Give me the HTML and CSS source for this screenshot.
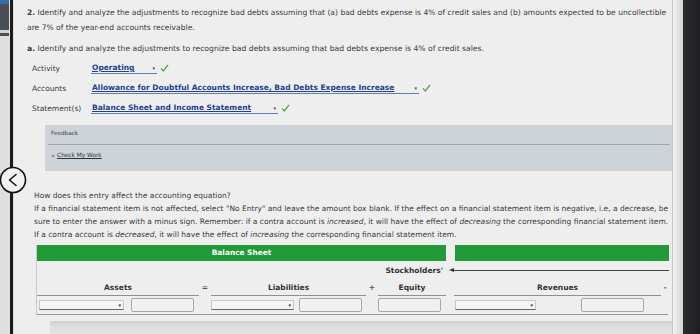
FILE: index.html
```html
<!DOCTYPE html>
<html>
<head>
<meta charset="utf-8">
<link rel="stylesheet" href="styles.css">
</head>
<body>
<div class="screen">
  <div class="rail"><div class="rail-top"></div><div class="rail-line"></div></div>
  <div class="back-btn">
    <svg width="28" height="28" viewBox="0 0 28 28"><circle cx="14" cy="14" r="12.5" fill="#f2f2f2" stroke="#111" stroke-width="1.6"/><path d="M17 8.5 L10.5 14 L17 19.5" fill="none" stroke="#111" stroke-width="1.6" stroke-linecap="round" stroke-linejoin="round"/></svg>
  </div>
  <main class="content">
    <p class="question"><b>2.</b> Identify and analyze the adjustments to recognize bad debts assuming that (a) bad debts expense is 4% of credit sales and (b) amounts expected to be uncollectible are 7% of the year-end accounts receivable.</p>
    <p class="sub"><b>a.</b> Identify and analyze the adjustments to recognize bad debts assuming that bad debts expense is 4% of credit sales.</p>
    <div class="fields">
      <div class="field">
        <span class="label">Activity</span>
        <span class="select sel-op"><span class="val">Operating</span><span class="caret">▾</span></span>
        <svg class="check" width="9" height="8" viewBox="0 0 9 8"><path d="M1 4.5 L3.3 7 L8 1" fill="none" stroke="#5aa35a" stroke-width="1.3"/></svg>
      </div>
      <div class="field">
        <span class="label">Accounts</span>
        <span class="select sel-acc"><span class="val">Allowance for Doubtful Accounts Increase, Bad Debts Expense Increase</span><span class="caret">▾</span></span>
        <svg class="check" width="9" height="8" viewBox="0 0 9 8"><path d="M1 4.5 L3.3 7 L8 1" fill="none" stroke="#5aa35a" stroke-width="1.3"/></svg>
      </div>
      <div class="field">
        <span class="label">Statement(s)</span>
        <span class="select sel-st"><span class="val">Balance Sheet and Income Statement</span><span class="caret">▾</span></span>
        <svg class="check" width="9" height="8" viewBox="0 0 9 8"><path d="M1 4.5 L3.3 7 L8 1" fill="none" stroke="#5aa35a" stroke-width="1.3"/></svg>
      </div>
    </div>
    <div class="feedback">
      <div class="fb-title">Feedback</div>
      <div class="fb-link"><span class="tri">▶</span><span class="u">Check My Work</span></div>
    </div>
    <p class="how">How does this entry affect the accounting equation?</p>
    <p class="instr">If a financial statement item is not affected, select "No Entry" and leave the amount box blank. If the effect on a financial statement item is negative, i.e, a decrease, be sure to enter the answer with a minus sign. Remember: if a contra account is <i>increased</i>, it will have the effect of <i>decreasing</i> the corresponding financial statement item. If a contra account is <i>decreased</i>, it will have the effect of <i>increasing</i> the corresponding financial statement item.</p>
    <div class="sheet">
      <div class="grid head-row">
        <div class="bar bar-bs">Balance Sheet</div>
        <div class="bar bar-is"></div>
      </div>
      <div class="grid se-row">
        <div class="se-label">Stockholders'</div>
        <div class="se-arrow"><span class="arrow-head"></span><span class="arrow-line"></span></div>
      </div>
      <div class="grid cols-row">
        <div class="col-h">Assets</div>
        <div class="op">=</div>
        <div class="col-h">Liabilities</div>
        <div class="op">+</div>
        <div class="col-h">Equity</div>
        <div></div>
        <div class="col-h">Revenues</div>
        <div class="op">-</div>
      </div>
      <div class="grid inputs-row">
        <div class="cell c-assets"><span class="dd w85"><span class="caret">▾</span></span><span class="box"></span></div>
        <div></div>
        <div class="cell c-liab"><span class="dd w83"><span class="caret">▾</span></span><span class="box"></span></div>
        <div></div>
        <div class="cell"><span class="box"></span></div>
        <div></div>
        <div class="cell c-rev"><span class="dd w81"><span class="caret">▾</span></span><span class="box"></span></div>
        <div></div>
      </div>
    </div>
    <div class="scrollbar"></div>
  </main>
  <div class="bezel"></div>
  <div class="edge"></div>
</div>
</body>
</html>
```
FILE: styles.css
```css
* { box-sizing: border-box; }
html, body { margin: 0; padding: 0; }
body {
  width: 700px;
  height: 334px;
  overflow: hidden;
  background: #ececec;
  font-family: "DejaVu Sans", Verdana, sans-serif;
  color: #3a3a3a;
}
.screen {
  display: flex;
  width: 700px;
  height: 334px;
  position: relative;
}
.rail {
  width: 14px;
  flex: none;
  background: #dedede;
  display: flex;
  position: relative;
}
.rail-top {
  width: 9px;
  height: 36px;
  background: linear-gradient(#2f6fa8 0 4px, #4a4f55 4px 30px, #cfd4d8 30px 33px, #4a4f55 33px);
}
.rail-line {
  width: 3px;
  margin-left: 1px;
  background: #1b1b1b;
}
.back-btn {
  position: absolute;
  left: -1px;
  top: 166px;
  width: 28px;
  height: 28px;
}
.back-btn svg { display: block; }
.content {
  flex: 1;
  min-width: 0;
  background: #eeeeee;
  padding: 5px 0 0 13px;
  display: flex;
  flex-direction: column;
}
p { margin: 0; }
.question {
  font-size: 7.58px;
  line-height: 15px;
  width: 652px;
}
.sub {
  font-size: 7.65px;
  line-height: 15px;
  margin-top: 6px;
}
.fields {
  margin-top: 2px;
  margin-left: 5px;
  display: flex;
  flex-direction: column;
}
.field {
  height: 20px;
  display: flex;
  align-items: center;
  font-size: 7.5px;
}
.label {
  width: 59px;
  flex: none;
}
.select {
  display: inline-flex;
  align-items: center;
  justify-content: space-between;
  border-bottom: 1px solid #5d7fb8;
  height: 11px;
  color: #22408f;
  font-weight: bold;
  padding-left: 1px;
}
.select .val { text-decoration: underline; text-underline-offset: 1px; }
.select .caret { font-size: 5px; color: #444; margin-right: 2px; margin-left: 6px; }
.sel-op { width: 66px; }
.sel-acc { width: 328px; }
.sel-st { width: 187px; }
.check { margin-left: 3px; }
.feedback {
  margin-top: 7px;
  margin-left: 18px;
  width: 628px;
  height: 48px;
  background: #cdd3d8;
  padding: 4px 3px 0 3px;
}
.fb-title {
  font-size: 5.7px;
  color: #444;
  padding-left: 3px;
  height: 16px;
  line-height: 9px;
  border-bottom: 1px solid #9ea5ab;
}
.fb-link {
  font-size: 5.8px;
  color: #333;
  padding-left: 4px;
  margin-top: 7px;
}
.fb-link .tri { color: #888; font-size: 4px; margin-right: 2px; }
.fb-link .u { text-decoration: underline; }
.how {
  font-size: 7.5px;
  line-height: 13px;
  margin-top: 18px;
  margin-left: 7px;
}
.instr {
  font-size: 7.5px;
  line-height: 13px;
  margin-left: 7px;
  width: 640px;
}
.sheet {
  margin-top: 4px;
  margin-left: 9px;
  width: 632px;
  border-left: 1px solid #c9c9c9;
  border-bottom: 1px solid #9a9a9a;
}
.grid {
  display: grid;
  grid-template-columns: 162px 12px 155px 12px 68px 8px 207px 8px;
}
.head-row { height: 16px; }
.bar {
  background: #239a38;
  color: #fff;
  font-weight: bold;
  font-size: 7.4px;
  display: flex;
  align-items: center;
  justify-content: center;
}
.bar-bs { grid-column: 1 / 6; }
.bar-is { grid-column: 7 / 9; margin-left: 1px; }
.se-row { height: 19px; align-items: center; }
.se-label {
  grid-column: 5;
  font-weight: bold;
  font-size: 7.5px;
  color: #333;
  text-align: right;
  padding-right: 3px;
  white-space: nowrap;
}
.se-arrow {
  grid-column: 6 / 9;
  display: flex;
  align-items: center;
  padding-left: 3px;
}
.arrow-head {
  width: 0; height: 0;
  border-top: 2.5px solid transparent;
  border-bottom: 2.5px solid transparent;
  border-right: 5px solid #333;
}
.arrow-line {
  flex: 1;
  height: 1px;
  background: #444;
}
.cols-row { height: 16px; align-items: center; }
.col-h {
  height: 16px;
  line-height: 16px;
  text-align: center;
  font-weight: bold;
  font-size: 7.5px;
  color: #333;
  border-bottom: 1px solid #8f8f8f;
}
.op { text-align: center; font-size: 7.5px; font-weight: bold; color: #555; }
.inputs-row { height: 18px; align-items: center; }
.cell { display: flex; align-items: center; height: 18px; }
.c-assets { padding-left: 2px; gap: 7px; }
.c-liab { gap: 5px; }
.c-rev { padding-left: 1px; gap: 45px; }
.dd {
  height: 10px;
  border: 1px solid #c8c8c8;
  border-bottom: 1.5px solid #666;
  background: #f4f4f4;
  display: flex;
  justify-content: flex-end;
  align-items: center;
  padding-right: 2px;
}
.dd .caret { font-size: 5px; color: #333; }
.w85 { width: 85px; }
.w83 { width: 83px; }
.w81 { width: 81px; }
.box {
  width: 63px;
  height: 14px;
  border: 1px solid #a8a8a8;
  border-radius: 2px;
  background: #f1f1f1;
}
.scrollbar {
  margin-top: 6px;
  margin-left: 23px;
  width: 631px;
  height: 14px;
  background: linear-gradient(#cfcfcf, #dedede 40%, #e4e4e4);
  border-radius: 3px 0 0 0;
}
.bezel {
  width: 11px;
  flex: none;
  background: linear-gradient(90deg, #f4f4f4, #d4d4d6);
  border-left: 1px solid #c4c4c4;
}
.edge {
  width: 17px;
  flex: none;
  background: linear-gradient(90deg, #2c2c30, #1d1d22);
}
```
